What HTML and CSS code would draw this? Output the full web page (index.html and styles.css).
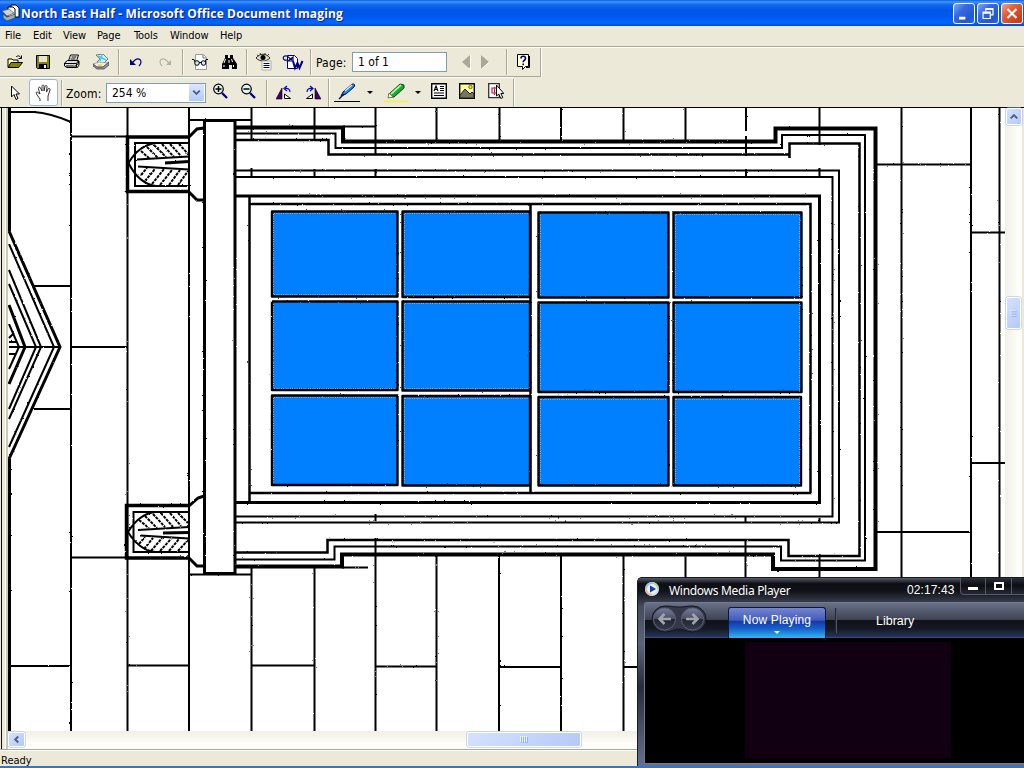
FILE: index.html
```html
<!DOCTYPE html>
<html lang="en">
<head>
<meta charset="utf-8">
<title>North East Half - Microsoft Office Document Imaging</title>
<link rel="stylesheet" href="styles.css">
</head>
<body>
<div class="app">
  <header class="titlebar">
    <svg class="app-icon" width="18" height="18" viewBox="0 0 18 18"><path d="M9 1h5l3 3v9H9z" fill="#fff" stroke="#000"/><path d="M6 3h5l2 2v8H6z" fill="#fff" stroke="#000"/><path d="M0 7l7-2 5 4-7 3z" fill="#c9d5d8" stroke="#555" stroke-width=".7"/><path d="M1 10l4 3 8-3v4l-8 3-4-3z" fill="#9eafb5" stroke="#344248" stroke-width=".7"/></svg>
    <h1 class="title">North East Half - Microsoft Office Document Imaging</h1>
    <div class="controls">
      <svg class="control" viewBox="0 0 21 21"><path d="M5 14h7v3H5z" fill="#fff"/></svg>
      <svg class="control" viewBox="0 0 21 21"><path d="M8 8V5h8v7h-3M8 6h8M5 9h8v7H5zM5 10h8" fill="none" stroke="#fff" stroke-width="1.300"/></svg>
      <svg class="control close" viewBox="0 0 21 21"><path d="M5.500 5.500l10 10M15.500 5.500l-10 10" stroke="#fff" stroke-width="2.300"/></svg>
    </div>
  </header>
  <nav class="menubar"><span class="m-file">File</span><span class="m-edit">Edit</span><span class="m-view">View</span><span class="m-page">Page</span><span class="m-tools">Tools</span><span class="m-window">Window</span><span>Help</span></nav>

  <div class="toolrow">
    <div class="toolbar first">
      <span class="cell"><svg class="icon" viewBox="0 0 16 16"><path d="M1 13V5h4l1 1h5v3" fill="#ffff9c" stroke="#000"/><path d="M1 13.500L4 8.500h11.500l-4 5z" fill="#848400" stroke="#000"/><path d="M9 3c2-2 4-1 5 1M14.500 1.500v3h-3" fill="none" stroke="#000"/></svg></span>
      <span class="cell"><svg class="icon save" viewBox="0 0 16 16"><path d="M1.500 1.500h13v13h-12l-1-1z" fill="#848400" stroke="#000"/><path d="M4 2h8v6H4z" fill="#e8e5d8"/><path d="M4 10h8v5H4z"/><path d="M9 11h2v3H9z" fill="#fff"/></svg></span>
      <span class="cell"><svg class="icon" viewBox="0 0 16 16"><path d="M4.500 7l2-6h8l-2 6z" fill="#fff" stroke="#000"/><path d="M7.500 3h5M6.500 5h5" stroke="#000"/><path d="M.5 9l3-2.500h11l-2 3v4H3L.5 12z" fill="#ddd" stroke="#000"/><path d="M1 9.500h11.500M2 12h10l2.500-3v-2M13 14l2-3V7" fill="none" stroke="#000"/><path d="M9 11h2" stroke="#dd0"/></svg></span>
      <span class="cell"><svg class="icon" viewBox="0 0 16 16"><path d="M3 1l7-1 5 5-5 5-6-2 3-3z" fill="#d7f4fb" stroke="#778"/><path d="M5 2l8 4M9 1l-2 6" stroke="#42cde0" stroke-width="1.500"/><path d="M0 10l6-2 9 1-5 4H4z" fill="#eee" stroke="#888" stroke-width=".7"/><path d="M0 10l4 3h6l6-5v3l-5 4H4l-4-3z" fill="#999" stroke="#333" stroke-width=".7"/><path d="M5 11h4" stroke="#fc3" stroke-width="1.500"/></svg></span>
      <i class="sep"></i>
      <span class="cell"><svg class="icon" viewBox="0 0 16 16"><path d="M4 9l3-3c3-2 6-1 6 2 0 2-1 3-2 4" fill="none" stroke="#000084" stroke-width="1.200"/><path d="M2 5v6h6z" fill="#000084"/></svg></span>
      <span class="cell"><svg class="icon" viewBox="0 0 16 16"><path d="M12 9L9 6C6 4 3 5 3 8c0 2 1 3 2 4" fill="none" stroke="#b5b2a4" stroke-width="1.200"/><path d="M14 6v5H9z" fill="#b5b2a4"/></svg></span>
      <i class="sep"></i>
      <span class="cell"><svg class="icon" viewBox="0 0 16 16"><path d="M3.500.500h8l3 3v12h-11z" fill="#fff" stroke="#999"/><path d="M11 1v3h3" fill="none" stroke="#777"/><circle cx="5" cy="9" r="2.300" fill="#c8f3f3" stroke="#000"/><circle cx="11.500" cy="9" r="2.300" fill="#c8f3f3" stroke="#000"/><path d="M0 5.500h2L3 8M7 8.500h2.500M13 8l1-2.500h2" fill="none" stroke="#000"/></svg></span>
      <span class="cell"><svg class="icon" viewBox="0 0 16 16"><path d="M4 1h3v3h2V1h3v3l4 6v5h-5v-4H8v4H1v-5l3-6z"/><path d="M4.500 5L3 9M10.500 5l1 3M3 11v2M12.500 11v2M8 6v3" stroke="#fff"/></svg></span>
      <i class="sep"></i>
      <span class="cell"><svg class="icon wide" viewBox="0 0 18 18"><path d="M1 5c4-5 10-5 14 0-4 4-10 4-14 0z" fill="#e7dfc0" stroke="#222"/><circle cx="8" cy="4.500" r="2.500"/><path d="M2 2l2 1M5 0l1 2M10 0v2M14 1l-2 2" stroke="#333"/><path d="M7 8h9v9H7z" fill="#fff" stroke="#99a" stroke-width=".8"/><path d="M8.500 10.500h6M8.500 12.500h6M8.500 14.500h6" stroke="#0000a0" stroke-width="1.200"/></svg></span>
      <span class="cell"><svg class="icon long" viewBox="0 0 22 18"><path d="M5.500 2.500h7l3 3v10h-10z" fill="#fff" stroke="#000084"/><path d="M5 7C0 8 0 2 5 3l5 4M11 4v4H6z" fill="none" stroke="#000084" stroke-width="1.200"/><path d="M11 8l2 7 2.500-5 2 5 3-7" fill="none" stroke="#000084" stroke-width="2"/></svg></span>
      <i class="sep"></i>
      <label class="label page-label" for="page">Page:</label>
      <span class="field page-field" id="page">1 of 1</span>
      <svg class="pager" viewBox="0 0 36 18"><path d="M12 2v14L4 9zM23 2v14l8-7z" fill="#aca899"/><path d="M12.500 2v14.500l-2-1.500M23 16.500L31.500 9" fill="none" stroke="#fff"/></svg>
      <i class="sep help-sep"></i>
      <span class="cell"><svg class="icon help" viewBox="0 0 16 18"><path d="M1.500 1.500h11v12h-3l-3 3v-3h-5z" fill="#ffffd2" stroke="#000"/><path d="M13.500 3v11.500H10" fill="none" stroke="#000"/><path d="M5 5.500c0-3 4.500-3 4.500 0C9.500 7.500 7.200 7 7.200 9.200M7.200 10.500v1.700" fill="none" stroke="#000084" stroke-width="1.600"/></svg></span>
    </div>
  </div>

  <div class="toolrow second-row">
    <div class="toolbar second">
      <span class="cell pointer"><svg class="icon" viewBox="0 0 16 16"><path d="M4.500 1v11l2.500-2.500 2 5 2-1-2-4.500h3.500z" fill="#fff" stroke="#000"/></svg></span>
      <span class="cell selected"><svg class="icon wide" viewBox="0 0 18 18"><path d="M5 17v-2L1.500 10c-1-2 .5-2.500 1.500-1.500L5 10 3.500 5c-.5-2 1.500-2.500 2-1L7 7V2.500c0-2 2-2 2 0V7l1-4.500c.5-2 2.300-1 2 .5L11.500 8 13 5c1-1.500 2.500-.5 2 1l-2 6v5" fill="#fff" stroke="#222" stroke-width=".9"/></svg></span>
      <i class="sep tight"></i>
      <label class="label zoom-label" for="zoom">Zoom:</label>
      <span class="field zoom-field" id="zoom"><span>254 %</span><svg class="combo-arrow" viewBox="0 0 15 18"><path d="M4 7l3.500 3.500L11 7" fill="none" stroke="#4d6185" stroke-width="2"/></svg></span>
      <span class="cell"><svg class="icon raised" viewBox="0 0 16 16"><path d="M10 10l5 5" stroke="#000084" stroke-width="2.300"/><circle cx="6.500" cy="6" r="4.800" fill="#e2f5f5" stroke="#000" stroke-width="1.200"/><path d="M3.500 6h6M6.500 3v6" stroke="#000" stroke-width="1.500"/></svg></span>
      <span class="cell"><svg class="icon raised" viewBox="0 0 16 16"><path d="M10 10l5 5" stroke="#000084" stroke-width="2.300"/><circle cx="6.500" cy="6" r="4.800" fill="#e2f5f5" stroke="#000" stroke-width="1.200"/><path d="M3.500 6h6" stroke="#000" stroke-width="1.500"/></svg></span>
      <i class="sep"></i>
      <span class="cell"><svg class="icon" viewBox="0 0 16 16"><path d="M6 3v11H0z" fill="#4b0068" stroke="#000" stroke-width=".6"/><path d="M8.500 9v4.500h6z" fill="#fff" stroke="#000"/><path d="M14 7c0-3-2-4-5-3.500M11 1L8 3.500l3 2.500" fill="none" stroke="#0000e0" stroke-width="1.200"/></svg></span>
      <span class="cell"><svg class="icon" viewBox="0 0 16 16"><path d="M10 3v11h6z" fill="#4b0068" stroke="#000" stroke-width=".6"/><path d="M7.500 9v4.500h-6z" fill="#fff" stroke="#000"/><path d="M2 7c0-3 2-4 5-3.500M5 1l3 2.500L5 6" fill="none" stroke="#0000e0" stroke-width="1.200"/></svg></span>
      <i class="edge"></i>
      <span class="cell"><svg class="icon tool" viewBox="0 0 26 20"><path d="M7 13l2-4 8-7c2-2 5-1 3 2l-8 7z" fill="#2182e7" stroke="#00105a"/><path d="M11 8l7-6" stroke="#d4f3ff" stroke-width="1.300"/><path d="M5 16l5-5" stroke="#00105a" stroke-width="1.500"/><path d="M0 18.500h26" stroke="#000"/></svg></span>
      <span class="drop"></span>
      <span class="cell"><svg class="icon tool" viewBox="0 0 26 20"><path d="M6 11L17 1l4 1v3l-10 9H6z" fill="#17a836" stroke="#064d11"/><path d="M8 11L18 2" stroke="#a7f5a0" stroke-width="1.700"/><path d="M6 10l4 4-5 1z" fill="#ff9" stroke="#555" stroke-width=".7"/><path d="M1 18.500h24" stroke="#f4f43a" stroke-width="1.500"/></svg></span>
      <span class="drop narrow"></span>
      <span class="cell"><svg class="icon raised" viewBox="0 0 16 16"><path d="M.7.700h14.600v14.600H.7z" fill="#fff" stroke="#000" stroke-width="1.400"/><path d="M3 8l2-5 2 5M4 6.500h2M9 3.500h4M9 5.500h4M9 7.500h4M3 10h10M3 12.500h10" fill="none" stroke="#000" stroke-width="1.100"/></svg></span>
      <span class="cell"><svg class="icon raised" viewBox="0 0 16 16"><path d="M.7.700h14.600v14.600H.7z" fill="#ffff9b" stroke="#000" stroke-width="1.400"/><circle cx="11.500" cy="4" r="1.700" fill="#fff200" stroke="#333" stroke-width=".7"/><path d="M1 12l5-6 5 5 2-2 2 2v4H1z" fill="#77765c" stroke="#222"/></svg></span>
      <span class="cell"><svg class="icon raised" viewBox="0 0 16 16"><path d="M.7.700h10.600v14H.7z" fill="#fff" stroke="#333" stroke-width="1.300"/><path d="M8 5H4v5h4M6.500 4v8" fill="none" stroke="#bb244b" stroke-width="1.200"/><path d="M8.500 2v11l2.300-2 2 4.500 2-1-2-4h3z" fill="#fff" stroke="#000"/></svg></span>
      <i class="edge last"></i>
    </div>
  </div>

  <main class="workspace">
    <div class="sash"></div>
    <div class="document">
      <svg class="drawing" viewBox="8 108 997 623">
        <defs><filter id="rough" filterUnits="userSpaceOnUse" x="8" y="108" width="997" height="623"><feTurbulence type="fractalNoise" baseFrequency=".45" numOctaves="2" seed="4"/><feDisplacementMap in="SourceGraphic" scale="1.800" xChannelSelector="R" yChannelSelector="G"/></filter></defs>
        <rect x="8" y="108" width="997" height="623" fill="#fff"/>
        <g class="ink" filter="url(#rough)">
          <path class="w3" d="M9.500 108V231M9.500 459V731"/>
          <path d="M9 112H34Q50 113 71 122M71 108V731M127.500 108V731M189 108V731"/>
          <path d="M71 136.500H127M71 347H127M34 286H71M32 409H71M71 557.500H127M9 666H71M127 665.500H189M251 665.500H315M375 666.500H437M499 667H561M623 667H640"/>
          <path d="M251.500 108V140M251.500 168V178M251.500 568V731M314.500 108V140M314.500 169V178M314.500 567V731M375.500 108V155M375.500 169V178M375.500 514V521M375.500 538V731M436.500 108V141M436.500 555V731M499.500 108V141M499 555V731M561 108V141M561 555V731M623.500 108V141M623.500 555V731M685.500 108V141M685.500 555V600M746 108V131M746 136V156M746 169V177M745.500 517V522M745.500 540V600M819.500 108V145M819.500 168V177M819.500 518V522M819.500 554V600M901.500 108V600M971 108V600M999.500 108V600"/>
          <path d="M876 164.500H971M971 232.500H1005M971 463H1005M876 532H971"/>
          <path class="w3" d="M9 231L60 347 9 459"/>
          <path d="M9 244L54 347 9 447M9 270L41 347 9 419M9 284L36 347 9 409M9 347H60M9 324L19 347 9 369M9 338L14 333M9 342H16M9 354H16"/>
          <path class="w3" d="M9 305L25 347 9 384"/>
          <path d="M189 120H251M189 574.500H251"/>
          <path class="w3" d="M204.500 120V574M235 119V575M204 120.500H235M204 573.500H235"/>
          <path class="w3" d="M189 137L197 129 204 128M189 192L197 200H204M189 506L198 498 204 496M189 558L197 566H204"/>
          <g>
            <path class="w35" d="M189 137H127.500V191.500H189"/>
            <path d="M189 143H135V186H189M128.500 163Q139 145 156 143M128.500 163Q139 184 156 186M137 159.500L189 156.500M138 166.500L189 169.500"/>
            <path class="w3" d="M165 163L189 161.500"/>
            <path class="hatch" d="M141 151L150 159M147 147L158 158M154 145L166 157M162 144L174 157M170 144L181 156M179 144L188 154M141 175L147 168M145 181L155 169M152 184L164 169M160 185L172 170M169 185L180 170M178 185L188 171"/>
          </g>
          <g>
            <path class="w35" d="M189 505.500H126.500V558H189"/>
            <path d="M189 512H133.500V552H189M128 532Q139 514 155 512M128 532Q139 550 155 552M138 530L189 527M140 535.500L189 538.500"/>
            <path class="w3" d="M163 533L189 532.500"/>
            <path class="hatch" d="M139 520L149 528M145 516L157 528M153 514L165 527M161 513L173 527M170 513L181 526M178 513L188 523M139 544L145 537M144 549L153 538M151 551L162 538M160 551L171 539M169 551L179 539M178 551L188 540"/>
          </g>
          <path class="w4" d="M235 127.500H343V141.500H775.500V128.500H875.500V569H773V554.500H342V566.500H235"/>
          <path d="M343 126.500H375M342 567.500H368"/>
          <path d="M235 133.500H335.500V148H782V135H865V560.500H781V546.500H334.500V559.500H235"/>
          <path class="w25" d="M235 140H328.500V154.500H789.500V158 M789.500 156V143.500H859.500V556H788.500V540H327.500V552.500H235"/>
          <path d="M235 170.500H839V522.500H235M235 177H832.500V516.500H235"/>
          <path class="w3" d="M235 196H819.500V502.500H235"/>
          <path class="w25" d="M249.500 196V502M250 204H810.500V493H250M530.500 204V493"/>
        </g>
        <g class="pane" filter="url(#rough)">
          <path d="M272 211.500H397.500V296.500H272zM402.500 211.500H530V297H402.500zM538.500 212.500H668.500V297.500H538.500zM673.500 212.500H801.500V297.500H673.500z"/>
          <path d="M272 301.500H397.500V390H272zM402.500 301.500H530V390.500H402.500zM538.500 302.500H668.500V392H538.500zM673.500 302.500H801.500V392H673.500z"/>
          <path d="M272 395.500H397.500V485H272zM402.500 396H530V485.500H402.500zM538.500 397H668.500V485.500H538.500zM673.500 397H801V485.500H673.500z"/>
        </g>
        <g class="grain">
          <path d="M273.500 214V295M404.500 214V295M540.500 215V295M675.500 215V295M273.500 304V388M404.500 304V388M540.500 304V390M675.500 304V390M273.500 398V483M404.500 398V483M540.500 399V483M675.500 399V483M799.500 215V484"/>
          <path d="M274 213.500H395M405 213.500H528M676 214.500H799M405 294.500H528M405 303.500H528M405 388.500H528M274 397.500H395M405 398.500H528M541 399.500H666M676 399.500H799M274 294.500H395M274 388.500H395"/>
        </g>
      </svg>
      <div class="vscroll">
        <svg class="arrow up" viewBox="0 0 15 16"><path d="M4 10l3.500-3.500L11 10" fill="none" stroke="#4d6185" stroke-width="2.200"/></svg>
        <svg class="thumb-v" viewBox="0 0 15 31"><path d="M4 12.500h6M4 14.500h6M4 16.500h6M4 18.500h6" stroke="#eef4fe"/><path d="M5 13.500h6M5 15.500h6M5 17.500h6M5 19.500h6" stroke="#8cb0f8"/></svg>
      </div>
      <div class="hscroll">
        <svg class="arrow" viewBox="0 0 16 15"><path d="M10 4L6.500 7.500 10 11" fill="none" stroke="#4d6185" stroke-width="2.200"/></svg>
        <svg class="thumb-h" viewBox="0 0 112 13"><path d="M52.500 3v6M54.500 3v6M56.500 3v6M58.500 3v6" stroke="#eef4fe"/><path d="M53.500 4v6M55.500 4v6M57.500 4v6M59.500 4v6" stroke="#8cb0f8"/></svg>
      </div>
    </div>
  </main>
  <footer class="status">Ready</footer>
  <div class="taskbar-edge"></div>
</div>

<section class="player">
  <header class="player-title">
    <svg class="player-logo" viewBox="0 0 16 16"><circle cx="8" cy="8" r="7" fill="#d9dcea"/><path d="M8 1a7 7 0 0 1 7 7H8z" fill="#b4cfa6"/><path d="M1 8a7 7 0 0 0 7 7V8z" fill="#e3bd95"/><path d="M1 8a7 7 0 0 1 7-7v7z" fill="#9dbbed"/><circle cx="8" cy="8" r="5" fill="#e8effb"/><path d="M6 4.500v7L12 8z" fill="#153b9c"/></svg>
    <span class="player-name">Windows Media Player</span>
    <span class="clock">02:17:43</span>
    <div class="player-controls"><span><i class="min"></i></span><span><i class="max"></i></span><span></span></div>
  </header>
  <div class="player-frame">
    <nav class="player-nav">
      <svg class="back-forward" viewBox="0 0 56 28"><defs><linearGradient id="orb" x2="0" y2="1"><stop offset="0" stop-color="#747c9a"/><stop offset=".48" stop-color="#4a4f64"/><stop offset=".5" stop-color="#20232d"/><stop offset="1" stop-color="#343b55"/></linearGradient></defs><path d="M14 1C20 1 23 2 28 2s8-1 14-1a13 13 0 0 1 0 26c-6 0-9-3-14-3s-8 3-14 3A13 13 0 0 1 14 1z" fill="#343849" stroke="#161820"/><circle cx="13.500" cy="14" r="11" fill="url(#orb)" stroke="#5c6072"/><circle cx="41.500" cy="14" r="11" fill="url(#orb)" stroke="#5c6072"/><path d="M20 14H9M13.500 9l-5 5 5 5M35 14h11M41.500 9l5 5-5 5" fill="none" stroke="#a0a3ac" stroke-width="2.600"/></svg>
      <span class="tab">Now Playing<i class="tab-arrow"></i></span>
      <i class="nav-sep"></i>
      <span class="library">Library</span>
    </nav>
    <div class="video"><div class="picture"></div></div>
  </div>
</section>
</body>
</html>
```
FILE: styles.css
```css
* { box-sizing: border-box; }
body { margin: 0; width: 1024px; height: 768px; overflow: hidden; font: 11px "DejaVu Sans Condensed", "DejaVu Sans", sans-serif; color: #000; }
.app { display: flex; flex-direction: column; width: 1024px; height: 768px; background: #ece9d8; }
svg { display: block; flex: none; }

.titlebar { display: flex; align-items: center; flex: none; height: 26px; padding: 0 1px 0 2px; background: linear-gradient(#0f5ddb 0, #3c95ff 7%, #1268ed 18%, #0055e5 40%, #005cf5 72%, #0367ff 88%, #0149cb 100%); }
.title { flex: 1; margin: 0 0 0 1px; color: #fff; font: bold 12px "Open Sans", sans-serif; letter-spacing: .14px; white-space: nowrap; text-shadow: 1px 1px #0a1f80; }
.controls { display: flex; gap: 2px; }
.control { width: 22px; height: 21px; border: 1px solid #fff; border-radius: 3px; background: linear-gradient(135deg, #84a9f6, #356ae0 35%, #2456cf 75%, #2a66ed); }
.close { background: linear-gradient(135deg, #f2a58c, #e2603d 35%, #ce4118 80%, #c63a12); }

.menubar { display: flex; flex: none; height: 21px; padding: 3px 0 0 5px; line-height: 14px; letter-spacing: -.1px; border-bottom: 1px solid #aca899; }
.menubar span { flex: none; white-space: nowrap; }
.m-file { width: 28px; } .m-edit { width: 30px; } .m-view { width: 34px; } .m-page { width: 37px; } .m-tools { width: 36px; } .m-window { width: 50px; }

.toolrow { flex: none; height: 30px; border-top: 1px solid #fff; }
.second-row { border-top-width: 0; border-bottom: 1px solid #000; height: 31px; }
.toolbar { display: flex; align-items: center; height: 29px; padding-left: 1px; border-bottom: 1px solid #aca899; }
.first { width: 541px; border-right: 1px solid #aca899; box-shadow: 1px 0 #fff; }
.second { width: 514px; border-top: 1px solid #fff; height: 30px; border-bottom: 0; }
.cell { display: flex; flex: none; align-items: center; justify-content: center; width: 28.500px; height: 28px; }
.icon { width: 16px; height: 16px; }
.save { margin-right: 2px; }
.raised { margin-bottom: 3px; margin-right: 1px; }
.wide { width: 18px; height: 18px; }
.long { width: 22px; height: 18px; }
.help { height: 18px; }
.tool { width: 26px; height: 20px; }
.sep { flex: none; width: 2px; height: 26px; margin: 0 2px 0 3px; border-left: 1px solid #aca899; border-right: 1px solid #f8f6ed; }
.edge { flex: none; width: 2px; height: 28px; margin: 0 3px 0 1px; border-left: 1px solid #aca899; border-right: 1px solid #fff; }
.last { margin: 0 0 0 2px; }
.pointer { width: 28px; }
.selected { width: 29px; height: 27px; background: #fff; border: 1px solid #98b5e2; border-radius: 3px; }
.label { flex: none; padding: 2px 0 0 1px; font-size: 12px; letter-spacing: .15px; white-space: nowrap; }
.page-label { width: 38px; padding-left: 2px; }
.zoom-label { width: 41px; }
.field { display: flex; flex: none; align-items: center; height: 20px; background: #fff; border: 1px solid #7f9db9; padding-left: 5px; font-size: 12px; white-space: nowrap; }
.page-field { width: 95px; }
.zoom-field { width: 100px; justify-content: space-between; padding-right: 1px; }
.combo-arrow { width: 15px; height: 17px; background: linear-gradient(#dce7fe, #b4c9f7); border-radius: 1px; }
.pager { width: 36px; height: 18px; margin-left: 11px; }
.help-sep { margin: 0 2px 0 12px; }
.drop { flex: none; width: 20px; display: flex; justify-content: center; padding-right: 3px; }
.drop::before { content: ""; border: 3px solid transparent; border-top-color: #000; border-bottom: 0; }
.narrow { width: 15px; padding-right: 0; }

.workspace { display: flex; flex: none; height: 641px; }
.sash { flex: none; width: 8px; background: linear-gradient(90deg, #ece9d8 1px, #111 1px 2px, #ece9d8 2px 5px, #fff 5px 6px, #ccc8b6 6px 8px); }
.document { display: grid; grid-template: 623px 18px / 997px 19px; }
.drawing { width: 997px; height: 623px; }
.ink { fill: none; stroke: #000; stroke-width: 2; }
.w25 { stroke-width: 2.500; } .w3 { stroke-width: 3; } .w35 { stroke-width: 3.500; } .w4 { stroke-width: 4; }
.hatch { stroke-width: 2; stroke-dasharray: 3 1; }
.pane { fill: #0080ff; stroke: #000; stroke-width: 2.400; stroke-linejoin: round; }
.grain { fill: none; stroke: #9faebc; stroke-width: 1; stroke-dasharray: 1 1.500 1 1; }
.vscroll { display: flex; flex-direction: column; padding-left: 1px; background: linear-gradient(90deg, #f0f0e8, #fdfdf9 70%, #fff 89%, #ece9d8 89%); }
.arrow, .thumb-v, .thumb-h { background: linear-gradient(135deg, #d5e2fe, #b5c9f8); border: 1px solid #fff; border-radius: 2px; box-shadow: 0 0 0 .5px #9fb7e8; }
.up { width: 16px; height: 17px; }
.thumb-v { width: 15px; height: 32px; margin-top: 172px; }
.hscroll { display: flex; grid-column: 1 / 3; padding: 1px 0 2px; background: linear-gradient(#f0f0e8, #fefdf8 75%, #fff); }
.hscroll .arrow { width: 17px; height: 15px; }
.thumb-h { width: 114px; height: 15px; margin-left: 442px; }
.status { flex: none; height: 17px; padding: 4px 0 0 1px; line-height: 14px; border-top: 1px solid #aca899; box-shadow: inset 0 1px #fff; }
.taskbar-edge { flex: none; height: 2px; background: #2f75d2; }

/* Floating window over the document */
.player { position: absolute; left: 637px; top: 577px; width: 387px; height: 189px; overflow: hidden; border: 1px solid #171a22; border-right: 0; border-bottom: 0; border-radius: 5px 0 0; background: linear-gradient(#555b6c 0, #0d0f13 3%, #111319 7%, #454b5d 15%, #5c637a 35%, #272c39 58%, #3a4052 70%, #666e91 100%); color: #fff; }
.player-title { display: flex; height: 24px; padding-left: 6px; }
.player-title > * { flex: none; }
.player-logo { width: 16px; height: 16px; margin-top: 3px; }
.player-name { width: 247px; padding: 4px 0 0 9px; font: 12px/17px "Noto Sans", sans-serif; letter-spacing: -.3px; white-space: nowrap; }
.clock { width: 53px; padding: 5px 0 0; font: 12px/15px "Liberation Sans", sans-serif; letter-spacing: .1px; white-space: nowrap; }
.player-controls { display: flex; height: 17px; }
.player-controls span { display: flex; justify-content: center; padding-top: 4px; width: 26px; border: 1px solid #525968; border-left-width: 0; border-top: 0; background: linear-gradient(#2b303a, #0b0d11 45%, #252933); }
.player-controls span:first-child { border-left-width: 1px; border-bottom-left-radius: 4px; }
.min { width: 10px; height: 3px; margin-top: 5px; background: #fff; }
.max { width: 10px; height: 8px; border: 2px solid #fff; }
.player-frame { margin-left: 6px; height: 162px; border: 1px solid #747b91; border-right: 0; border-radius: 3px 0 0; }
.player-nav { display: flex; height: 35px; padding-left: 6px; font: 12.500px/16px "Liberation Sans", sans-serif; background: linear-gradient(#687087, #3f4454 47%, #111216 50%, #141824 72%, #28355b 98%, #7480a0); }
.back-forward { width: 56px; height: 28px; margin-top: 2px; }
.tab { display: flex; flex-direction: column; align-items: center; width: 98px; height: 31px; margin: 4px 0 0 21px; padding-top: 4px; border: 1px solid #10183a; border-bottom: 0; border-radius: 3px 3px 0 0; background: linear-gradient(#7586cf, #425cbc 40%, #1539a6 45%, #1763cf 70%, #35b5ed); font-size: 12px; letter-spacing: .15px; white-space: nowrap; }
.tab-arrow { margin-top: 3px; border: 3px solid transparent; border-top-color: #d7fbff; border-bottom: 0; }
.nav-sep { width: 2px; height: 25px; margin: 5px 0 0 9px; border-left: 1px solid #23272f; border-right: 1px solid #505668; }
.library { padding: 10px 0 0 39px; }
.video { height: 125px; padding: 4px 0 0 100px; background: #000; }
.picture { width: 206px; height: 116px; background: #110011; }
```
